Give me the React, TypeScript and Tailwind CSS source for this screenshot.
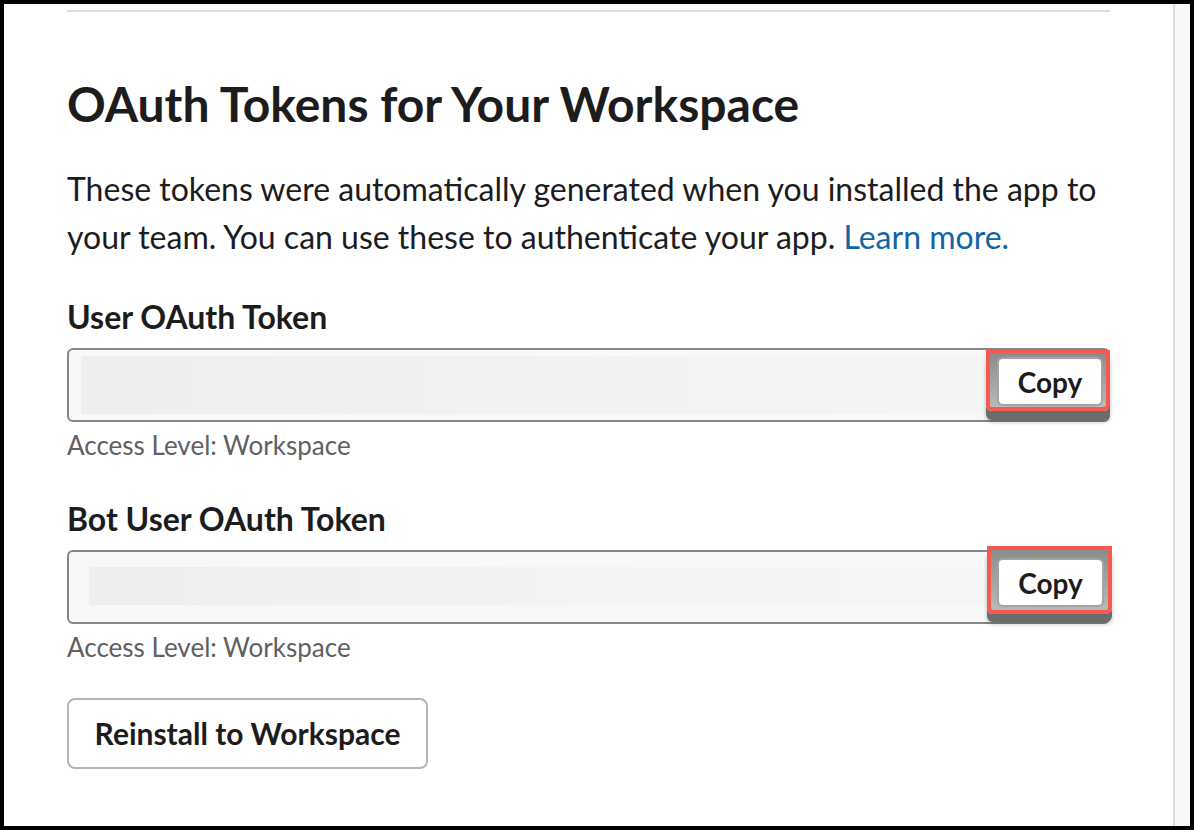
import React from 'react';

const font = { fontFamily: 'Lato, "Noto Sans", sans-serif' };

function CopyButton({ tall }: { tall?: boolean }) {
  return (
    <div
      className={
        tall
          ? 'mr-[-4px] mt-[-6px] h-[68px] w-[125px] shrink-0 rounded-b-[6px] border-[4px] border-[#f45b4e] bg-gradient-to-b from-[#8c8c8c] to-[#b9b9b9] pb-[3px] pl-[6px] pr-[4px] pt-[8px] shadow-[0_8px_0_0_#6c6c6c,0_10px_4px_rgba(0,0,0,0.25)]'
          : 'mr-[-2px] h-[61px] w-[124px] shrink-0 rounded-b-[6px] border-[4px] border-[#f45b4e] bg-gradient-to-b from-[#8c8c8c] to-[#b9b9b9] pb-[1px] pl-[7px] pr-[3px] pt-[3px] shadow-[0_9px_0_0_#6c6c6c,0_11px_4px_rgba(0,0,0,0.25)]'
      }
    >
      <button className="flex h-full w-full items-center justify-center rounded-[6px] border-2 border-[#a3a3a3] bg-white text-[28px] font-bold text-[#1d1c1d]">
        Copy
      </button>
    </div>
  );
}

function TokenField({ label, bot }: { label: string; bot?: boolean }) {
  return (
    <div>
      <div className="text-[32px] font-bold leading-[40px] text-[#1d1c1d]">{label}</div>
      <div className="mt-[11px] flex h-[74px] items-start rounded-[6px] border-2 border-[#868686] bg-[#f8f8f8] pl-[12px]">
        {bot ? (
          <div className="ml-[8px] mt-[15px] h-[38px] flex-1 bg-gradient-to-r from-[#eeeeee] via-[#f3f3f3] to-[#f6f6f6]" />
        ) : (
          <div className="mt-[6px] h-[58px] flex-1 bg-gradient-to-r from-[#eeeeee] via-[#f2f2f2] to-[#f5f5f5]" />
        )}
        <CopyButton tall={bot} />
      </div>
      <div className="mt-[7px] text-[26px] leading-[32px] text-[#616061]">Access Level: Workspace</div>
    </div>
  );
}

export default function App() {
  return (
    <div className="h-[830px] w-[1194px] overflow-hidden bg-black p-[4px]" style={font}>
      <div className="flex h-full w-full">
        <div className="flex-1 bg-white pl-[63px] pr-[63px] pt-[6px]">
          <div className="h-[2px] w-[1043px] bg-[#dddddd]" />
          <h1 className="mt-[64px] text-[48px] font-bold leading-[56px] text-[#1d1c1d]">OAuth Tokens for Your Workspace</h1>
          <p className="mt-[33px] w-[1043px] text-[32px] leading-[48px] text-[#1d1c1d]">
            These tokens were automatically generated when you installed the app to your team. You can use these to
            authenticate your app. <a className="text-[#1264a3]">Learn more.</a>
          </p>
          <div className="mt-[36px] w-[1043px] space-y-[38px]">
            <TokenField label="User OAuth Token" />
            <TokenField label="Bot User OAuth Token" bot />
          </div>
          <button className="mt-[35px] h-[71px] w-[361px] rounded-[8px] border-2 border-[#b5b5b5] bg-white text-[30px] font-bold text-[#1d1c1d]">
            Reinstall to Workspace
          </button>
        </div>
        <div className="w-[17px] shrink-0 border-l-2 border-[#dddddd] bg-[#f7f7f7]" />
      </div>
    </div>
  );
}
